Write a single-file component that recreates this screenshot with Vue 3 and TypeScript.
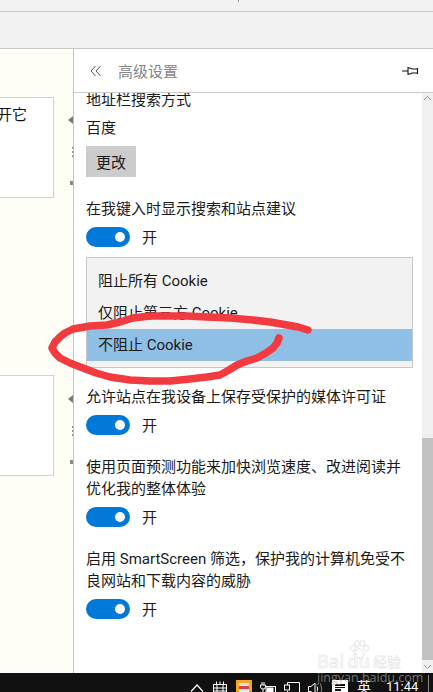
<template>
  <div class="page">
    <div class="tabstrip"><span class="tick"></span></div>
    <div class="toolbar"></div>

    <div class="main">
      <div class="webpage">
        <div class="card first"><span class="clipped">开它</span></div>
        <div class="card second"></div>
        <div class="splitter" v-for="y in markers" :key="y.top" :class="y.kind" :style="{ top: y.top + 'px' }"></div>
      </div>

      <aside class="panel">
        <header class="panel-head">
          <svg class="back" width="12" height="12" viewBox="0 0 12 12" fill="none" stroke="#555" stroke-width="1">
            <path d="M5.500 1 L1 6 L5.500 11 M10.500 1 L6 6 L10.500 11" />
          </svg>
          <span class="panel-title">高级设置</span>
          <svg class="pin" width="17" height="10" viewBox="0 0 17 10" fill="none" stroke="#111" stroke-width="1.1">
            <path d="M0 5 H6 M6 1 V9 M6 2 H8 L10 3 H15.500 V7 H10 L8 8 H6 M15.500 2 V8" />
          </svg>
        </header>

        <div class="panel-body">
          <div class="settings">
            <p class="label top">地址栏搜索方式</p>
            <p class="value">百度</p>
            <button class="change">更改</button>

            <p class="label section">在我键入时显示搜索和站点建议</p>
            <div class="toggle-row"><span class="toggle"><i></i></span><span class="state">开</span></div>

            <ul class="dropdown">
              <li v-for="o in cookieOptions" :key="o" :class="{ selected: o === selected }">{{ o }}</li>
            </ul>

            <template v-for="s in switches" :key="s[0]">
              <p class="label section">
                <template v-for="(line, i) in s" :key="i">{{ line }}<br v-if="i < s.length - 1" /></template>
              </p>
              <div class="toggle-row"><span class="toggle"><i></i></span><span class="state">开</span></div>
            </template>
          </div>

          <div class="scrollbar">
            <svg class="arrow" width="11" height="11" viewBox="0 0 11 11" fill="none" stroke="#999"><path d="M2 7 L5.500 3.500 L9 7" /></svg>
            <div class="thumb"></div>
            <svg class="arrow" width="11" height="11" viewBox="0 0 11 11" fill="none" stroke="#999"><path d="M2 4 L5.500 7.500 L9 4" /></svg>
          </div>
        </div>
      </aside>
    </div>

    <footer class="taskbar">
      <svg class="tray chev" width="14" height="8" viewBox="0 0 14 8" fill="none" stroke="#fff" stroke-width="1.2"><path d="M1 7.500 L7 1 L13 7.500" /></svg>
      <svg class="tray wall" width="14" height="14" viewBox="0 0 14 14" fill="none" stroke="#fff"><path d="M.5 3.500 H13.500 V13.500 H.5 Z M.5 7 H13.500 M.5 10 H13.500 M3.500 .5 V3.500 M7 .5 V3.500 M10.500 .5 V3.500 M4 3.500 V13.500 M10 3.500 V13.500" /></svg>
      <span class="app-icon"><i></i></span>
      <svg class="tray plug" width="16" height="14" viewBox="0 0 16 14" fill="none" stroke="#fff"><path d="M.5 3 V5 Q.5 7 3 7 Q5.500 7 5.500 5 V3 Z M2 3 V0 M4 3 V0 M3 7 V12" /><rect x="6" y="4.500" width="9.500" height="8" /><rect x="7" y="6" width="6" height="5" fill="#fff" /></svg>
      <svg class="tray net" width="16" height="14" viewBox="0 0 16 14" fill="none" stroke="#fff"><path d="M3.500 .5 H15.500 V13 H3.500 V9 M3.500 4 V.5" /><rect x=".5" y="3" width="5" height="5" fill="#111" /></svg>
      <svg class="tray sound" width="15" height="14" viewBox="0 0 15 14" fill="none" stroke="#fff"><path d="M.5 4.500 H3 L7 1 V13 L3 9.500 H.5 Z M9 4.500 Q10.500 7 9 9.500" /><path d="M12.500 1.500 Q15 7 12.500 12.500" stroke="#888" /></svg>
      <span class="notify"><i></i><i></i><i class="short"></i></span>
      <span class="lang">英</span>
      <span class="clock">11:44</span>
      <span class="show-desktop"></span>
    </footer>

    <div class="watermark">
      <svg class="paw" width="22" height="20" viewBox="0 0 22 20" fill="none" stroke="#e2e2e2"><ellipse cx="5" cy="8" rx="2.500" ry="3" /><ellipse cx="9" cy="3.500" rx="2.500" ry="3" /><ellipse cx="14.500" cy="3.500" rx="2.500" ry="3" /><ellipse cx="18" cy="8" rx="2.500" ry="3" /><path d="M11 8 Q16 11 16 15 Q15 19 11 17.500 Q7 19 6 15 Q6 11 11 8 Z" /></svg>
      <div class="wm-brand"><span>Bai</span><span>du</span><span class="wm-cn">经验</span></div>
      <div class="wm-url">jingyan.baidu.com</div>
    </div>

    <svg class="scribble" width="433" height="692" viewBox="0 0 433 692" fill="none">
      <path
        d="M308 330 L298 327 L287 325 L270 322 L253 320 L230 318 L207 317 L187 316 L167 316 L150 316 L133 318 L120 322 L107 325 L90 326 L73 329 L65 333 L60 337 L55 342 L52 348 L55 353 L60 358 L70 363 L83 368 L96 373 L110 377 L130 380 L150 381 L170 381 L190 379 L207 377 L220 375 L229 370 L237 365 L247 361 L257 358 L266 353 L273 348 L277 343 L279 338"
        stroke="#f23b40"
        stroke-width="7.500"
        stroke-linecap="round"
        stroke-linejoin="round"
      />
    </svg>
  </div>
</template>

<script setup lang="ts">
const cookieOptions: string[] = ['阻止所有 Cookie', '仅阻止第三方 Cookie', '不阻止 Cookie']
const selected = '不阻止 Cookie'

const switches: string[][] = [
  ['允许站点在我设备上保存受保护的媒体许可证'],
  ['使用页面预测功能来加快浏览速度、改进阅读并', '优化我的整体体验'],
  ['启用 SmartScreen 筛选，保护我的计算机免受不', '良网站和下载内容的威胁'],
]

// little marks on the edge of the page behind the panel
const markers = [
  { top: 67, kind: 'arrow' },
  { top: 98, kind: 'dots' },
  { top: 132, kind: 'square' },
  { top: 346, kind: 'arrow' },
  { top: 377, kind: 'dots' },
  { top: 411, kind: 'square' },
]
</script>

<style>
html,
body {
  margin: 0;
  overflow: hidden;
  background: #fff;
}
</style>

<style scoped>
.page {
  position: relative;
  width: 433px;
  height: 692px;
  display: flex;
  flex-direction: column;
  overflow: hidden;
  font-family: Roboto, "Noto Sans CJK SC", sans-serif;
  color: #1a1a1a;
}
.tabstrip {
  position: relative;
  height: 11px;
  flex: none;
  background: #f2f2f2;
  border-bottom: 1px solid #ccc;
}
.tick {
  position: absolute;
  left: 238px;
  top: 0;
  width: 1px;
  height: 2px;
  background: #999;
}
.toolbar {
  height: 36px;
  flex: none;
  background: #f2f2f2;
  border-bottom: 1px solid #c8c8c8;
}
.main {
  flex: 1;
  min-height: 0;
  display: flex;
}
.webpage {
  position: relative;
  width: 73px;
  flex: none;
  background: #fffef6;
}
.card {
  width: 54px;
  height: 101px;
  box-sizing: border-box;
  background: #fff;
  border: 1px solid #d2d2d2;
  border-left: none;
  overflow: hidden;
}
.first {
  margin-top: 48px;
}
.second {
  margin-top: 177px;
}
.clipped {
  display: block;
  width: 30px;
  margin: 7px 0 0 -3px;
  font-size: 15px;
  line-height: 20px;
  white-space: nowrap;
  color: #111;
}
.splitter {
  position: absolute;
}
.splitter.arrow {
  left: 68px;
  width: 0;
  height: 0;
  border-top: 4px solid transparent;
  border-bottom: 4px solid transparent;
  border-right: 5px solid #777;
}
.splitter.dots {
  left: 72px;
  width: 1px;
  height: 10px;
  background: repeating-linear-gradient(#888 0 2px, transparent 2px 4px);
}
.splitter.square {
  left: 70px;
  width: 3px;
  height: 4px;
  background: #888;
}
.panel {
  flex: 1;
  min-width: 0;
  display: flex;
  flex-direction: column;
  background: #fff;
  border-left: 1px solid #c4c4c4;
}
.panel-head {
  height: 43px;
  flex: none;
  display: flex;
  align-items: center;
  padding: 0 14px 0 16px;
  border-bottom: 1px solid #ccc;
}
.panel-title {
  flex: 1;
  margin-left: 16px;
  padding-bottom: 1px;
  font-size: 15px;
  color: #858585;
}
.panel-body {
  flex: 1;
  min-height: 0;
  display: flex;
}
.settings {
  flex: 1;
  min-width: 0;
  overflow: hidden;
  padding-left: 12px;
}
.label,
.value {
  margin: 0;
  font-size: 15px;
  line-height: 22px;
  white-space: nowrap;
}
.label.top {
  margin-top: -4px;
}
.value {
  margin-top: 6px;
}
.label.section {
  margin-top: 21px;
}
.change {
  display: block;
  width: 50px;
  height: 31px;
  margin-top: 7px;
  padding: 0 0 1px;
  border: none;
  background: #ccc;
  font: inherit;
  font-size: 15px;
  color: #1a1a1a;
}
.toggle-row {
  display: flex;
  align-items: center;
  gap: 12px;
  height: 20px;
  margin-top: 7px;
  font-size: 15px;
}
.state {
  padding-bottom: 2px;
}
.toggle {
  position: relative;
  width: 44px;
  height: 20px;
  border-radius: 10px;
  background: #0078d7;
}
.toggle i {
  position: absolute;
  right: 5px;
  top: 5px;
  width: 10px;
  height: 10px;
  border-radius: 50%;
  background: #fff;
}
.dropdown {
  list-style: none;
  width: 327px;
  box-sizing: border-box;
  margin: 10px 0 -3px;
  padding: 7px 0 6px;
  background: #f2f2f2;
  border: 1px solid #c8c8c8;
  font-size: 15px;
}
.dropdown li {
  height: 32px;
  line-height: 32px;
  padding-left: 11px;
}
.dropdown li.selected {
  background: #90bfe6;
}
.scrollbar {
  width: 11px;
  flex: none;
  display: flex;
  flex-direction: column;
  background: #f0f0f0;
}
.arrow {
  flex: none;
}
.scrollbar .arrow:first-child {
  margin-bottom: auto;
}
.thumb {
  order: 1;
  height: 222px;
  background: #c2c2c2;
}
.scrollbar .arrow:last-child {
  order: 2;
  margin-top: 1px;
  margin-bottom: 1px;
}
.taskbar {
  height: 19px;
  flex: none;
  display: flex;
  align-items: flex-start;
  overflow: hidden;
  background: #111;
  padding-left: 190px;
  color: #fff;
}
.tray {
  flex: none;
  margin-right: 8px;
  margin-top: 9px;
}
.tray.chev {
  margin-top: 11px;
  margin-right: 9px;
}
.tray.wall {
  margin-top: 8px;
  margin-right: 9px;
}
.app-icon {
  flex: none;
  width: 16px;
  height: 14px;
  margin: 7px 8px 0 0;
  background: #f5a623;
  display: flex;
  align-items: center;
  justify-content: center;
}
.app-icon i {
  width: 10px;
  height: 9px;
  background: linear-gradient(#e0e0e0 30%, #d9404a 30% 65%, #e8e8e8 65%);
}
.tray.sound {
  margin-right: 9px;
}
.notify {
  flex: none;
  width: 16px;
  height: 14px;
  box-sizing: border-box;
  padding: 4px 3px 0;
  margin: 7px 9px 0 0;
  background: #fff;
  display: flex;
  flex-direction: column;
  gap: 1px;
}
.notify i {
  height: 1.500px;
  background: #111;
}
.notify i.short {
  width: 60%;
}
.lang {
  flex: none;
  width: 14px;
  margin-top: 5px;
  font-size: 14px;
  line-height: 18px;
}
.clock {
  flex: none;
  width: 31px;
  margin: 5px 0 0 15px;
  font-family: Roboto, sans-serif;
  font-size: 13px;
  line-height: 18px;
  white-space: nowrap;
}
.show-desktop {
  flex: none;
  margin: 2px 0 0 11px;
  width: 1px;
  height: 17px;
  background: #888;
}
.watermark {
  position: absolute;
  left: 317px;
  top: 640px;
  width: 90px;
  height: 42px;
  pointer-events: none;
}
.paw {
  position: absolute;
  left: 31px;
  top: 0;
}
.wm-brand {
  position: absolute;
  left: 0;
  top: 10px;
  display: flex;
  font-family: "Open Sans", sans-serif;
  font-size: 18px;
  font-weight: 600;
  line-height: 22px;
  color: #f8f8f8;
  -webkit-text-stroke: 0.4px #e2e2e2;
}
.wm-brand span + span {
  margin-left: 3px;
}
.wm-cn {
  font-family: "Noto Sans CJK SC", sans-serif;
  font-size: 14px;
  font-weight: 400;
}
.wm-url {
  position: absolute;
  left: 0;
  top: 31px;
  font-family: "Open Sans", sans-serif;
  font-size: 12.500px;
  line-height: 14px;
  white-space: nowrap;
  color: #b5b5b5;
  opacity: 0.6;
}
.scribble {
  position: absolute;
  left: 0;
  top: 0;
  pointer-events: none;
}
</style>
